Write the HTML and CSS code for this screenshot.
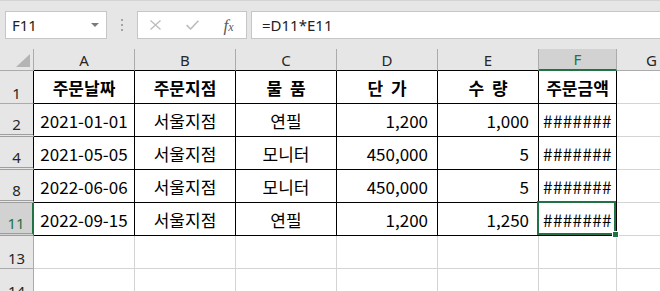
FILE: index.html
```html
<!DOCTYPE html>
<html>
    <head>
      <meta charset="utf-8">
      <title>주문 내역</title>
      <link rel="stylesheet" href="styles.css">
    </head>

    <body>
        <div class="toolbar">
            <div class="name_box">
                <span>F11</span>
                <span class="caret"></span>
            </div>
            <div class="grip">
                <svg width="2" height="12" viewBox="0 0 2 12"><rect x="0" y="0" width="2" height="2" fill="#a3a3a3"/><rect x="0" y="5" width="2" height="2" fill="#a3a3a3"/><rect x="0" y="10" width="2" height="2" fill="#a3a3a3"/></svg>
            </div>
            <div class="fx_btns">
                <svg width="11" height="10" viewBox="0 0 11 10"><path d="M0.5 0.5 L10.5 9.5 M10.5 0.5 L0.5 9.5" stroke="#bcbcbc" stroke-width="1.3" fill="none"/></svg>
                <svg width="13" height="10" viewBox="0 0 13 10"><path d="M0.6 5.2 L4.6 9 L12.4 0.8" stroke="#bcbcbc" stroke-width="1.6" fill="none"/></svg>
                <span class="fx"><i>f</i><i class="fx_x">x</i></span>
            </div>
            <div class="formula">=D11*E11</div>
        </div>

        <div class="sheet">
            <!-- 열 머리글 -->
            <div class="corner"><span class="tri"></span></div>
            <div class="col_hd tb">A</div>
            <div class="col_hd tb">B</div>
            <div class="col_hd tb">C</div>
            <div class="col_hd tb">D</div>
            <div class="col_hd tb">E</div>
            <div class="col_hd sel">F</div>
            <div class="col_hd">G</div>

            <!-- 1행 -->
            <div class="row_hd">1</div>
            <div class="cell t bold">주문날짜</div>
            <div class="cell t bold">주문지점</div>
            <div class="cell t bold">물 품</div>
            <div class="cell t bold">단 가</div>
            <div class="cell t bold">수 량</div>
            <div class="cell t bold">주문금액</div>
            <div class="cell"></div>

            <!-- 2행 -->
            <div class="row_hd gap">2</div>
            <div class="cell t">2021-01-01</div>
            <div class="cell t">서울지점</div>
            <div class="cell t">연필</div>
            <div class="cell t num">1,200</div>
            <div class="cell t num">1,000</div>
            <div class="cell t hash">#######</div>
            <div class="cell"></div>

            <!-- 4행 -->
            <div class="row_hd gap">4</div>
            <div class="cell t">2021-05-05</div>
            <div class="cell t">서울지점</div>
            <div class="cell t">모니터</div>
            <div class="cell t num">450,000</div>
            <div class="cell t num">5</div>
            <div class="cell t hash">#######</div>
            <div class="cell"></div>

            <!-- 8행 -->
            <div class="row_hd gap">8</div>
            <div class="cell t">2022-06-06</div>
            <div class="cell t">서울지점</div>
            <div class="cell t">모니터</div>
            <div class="cell t num">450,000</div>
            <div class="cell t num">5</div>
            <div class="cell t hash">#######</div>
            <div class="cell"></div>

            <!-- 11행 (선택) -->
            <div class="row_hd gap sel">11</div>
            <div class="cell t">2022-09-15</div>
            <div class="cell t">서울지점</div>
            <div class="cell t">연필</div>
            <div class="cell t num">1,200</div>
            <div class="cell t num">1,250</div>
            <div class="cell t hash active">#######</div>
            <div class="cell"></div>

            <!-- 13, 14행 -->
            <div class="row_hd plain">13</div>
            <div class="cell"></div>
            <div class="cell"></div>
            <div class="cell"></div>
            <div class="cell"></div>
            <div class="cell"></div>
            <div class="cell"></div>
            <div class="cell"></div>

            <div class="row_hd plain">14</div>
            <div class="cell"></div>
            <div class="cell"></div>
            <div class="cell"></div>
            <div class="cell"></div>
            <div class="cell"></div>
            <div class="cell"></div>
            <div class="cell"></div>
        </div>
    </body>
</html>
```

FILE: styles.css
```css
body{
    margin: 0;
    width: 660px;
    height: 291px;
    overflow: hidden;
    background-color: #fff;
    font-family: "Noto Sans", sans-serif;
}
.toolbar{
    display: flex;
    align-items: flex-start;
    height: 49px;
    box-sizing: border-box;
    padding: 10px 0 0 5px;
    background-color: #e6e6e6;
    border-top: 1px solid #d4d4d4;
}
.name_box{
    display: flex;
    align-items: center;
    justify-content: space-between;
    width: 102px;
    height: 28px;
    box-sizing: border-box;
    padding: 0 7px 0 6px;
    border: 1px solid #c6c6c6;
    background-color: #fff;
    font-size: 15px;
    color: #222;
}
.name_box .caret{
    width: 0;
    height: 0;
    border-left: 4px solid transparent;
    border-right: 4px solid transparent;
    border-top: 4px solid #7a7a7a;
}
.grip{
    display: flex;
    align-items: center;
    justify-content: center;
    width: 30px;
    height: 28px;
}
.fx_btns{
    display: flex;
    align-items: center;
    justify-content: space-around;
    width: 110px;
    height: 28px;
    box-sizing: border-box;
    border: 1px solid #c6c6c6;
    background-color: #fff;
}
.fx{
    font-family: "Liberation Serif", serif;
    font-size: 17px;
    color: #5a5a5a;
    line-height: 1;
}
.fx .fx_x{
    font-size: 12px;
}
.formula{
    flex: 1;
    height: 28px;
    box-sizing: border-box;
    margin-left: 4px;
    padding-left: 10px;
    border: 1px solid #c6c6c6;
    border-right: none;
    background-color: #fff;
    font-size: 15px;
    line-height: 26px;
    color: #222;
}

.sheet{
    display: grid;
    grid-template-columns: 34px 101px 101px 101px 101px 101px 78px 70px;
    grid-template-rows: 22px repeat(7, 33px);
    width: 687px;
}
.corner,
.col_hd,
.row_hd{
    box-sizing: border-box;
    display: flex;
    justify-content: center;
    background-color: #e6e6e6;
    border-right: 1px solid #ababab;
    border-bottom: 1px solid #ababab;
    font-size: 15px;
    color: #262626;
}
.corner{
    align-items: flex-end;
    justify-content: flex-end;
    padding: 0 3px 3px 0;
}
.corner .tri{
    width: 0;
    height: 0;
    border-left: 14px solid transparent;
    border-bottom: 13px solid #b4b4b4;
}
.col_hd{
    align-items: center;
}
.col_hd.tb{
    border-bottom-color: #000;
}
.col_hd.sel{
    background-color: #d2d2d2;
    border-bottom: 2px solid #217346;
    color: #217346;
}
.row_hd{
    align-items: flex-end;
    line-height: 20px;
    border-right-color: #000;
}
.row_hd.gap{
    border-bottom: 3px double #9e9e9e;
}
.row_hd.plain{
    border-right-color: #ababab;
}
.row_hd.sel{
    background-color: #d2d2d2;
    border-right: 2px solid #217346;
    color: #217346;
}

.cell{
    box-sizing: border-box;
    display: flex;
    align-items: center;
    justify-content: center;
    border-right: 1px solid #d4d4d4;
    border-bottom: 1px solid #d4d4d4;
    font-family: "Noto Sans CJK KR", sans-serif;
    font-size: 17px;
    color: #000;
    white-space: pre;
    word-spacing: 4px;
}
.cell.t{
    border-right-color: #000;
    border-bottom-color: #000;
}
.cell.bold{
    font-weight: bold;
}
.cell.num{
    justify-content: flex-end;
    padding-right: 9px;
}
.cell.hash{
    letter-spacing: 0.4px;
}
.cell.active{
    position: relative;
}
.cell.active::before{
    content: "";
    position: absolute;
    left: -2px;
    top: -2px;
    right: 0;
    bottom: 0;
    border: 2px solid #217346;
}
.cell.active::after{
    content: "";
    position: absolute;
    right: -3px;
    bottom: -3px;
    width: 5px;
    height: 5px;
    background-color: #217346;
    border: 1px solid #fff;
}
```
